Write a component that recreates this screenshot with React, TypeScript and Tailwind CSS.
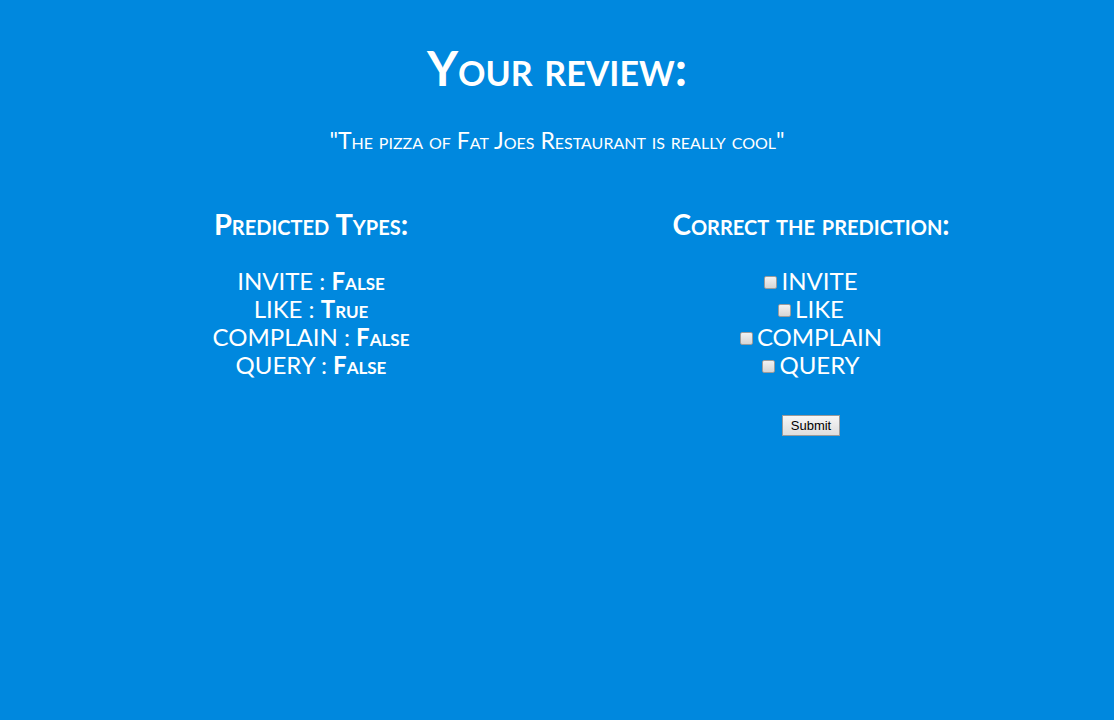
const predicted = [
  { label: "INVITE", value: "False" },
  { label: "LIKE", value: "True" },
  { label: "COMPLAIN", value: "False" },
  { label: "QUERY", value: "False" },
];

export default function App() {
  return (
    <div className="min-h-[720px] bg-[#0088de] text-white font-['Lato',sans-serif] text-center">
      <div className="pt-[39px]">
        <h1 className="text-[48px] leading-[58px] font-bold [font-variant:small-caps]">
          Your review:
        </h1>
        <p className="mt-[29px] text-[23px] leading-[28px] [font-variant:small-caps]">
          "The pizza of Fat Joes Restaurant is really cool"
        </p>
      </div>

      <div className="ml-[61px] mt-[53px] grid w-[1000px] grid-cols-2">
        {/* left */}
        <div>
          <h2 className="text-[29px] leading-[34px] font-bold [font-variant:small-caps]">
            Predicted Types:
          </h2>
          <div className="mt-[26px] text-[24px] leading-[28px]">
            {predicted.map((p) => (
              <div key={p.label}>
                {p.label} : <span className="font-bold [font-variant:small-caps]">{p.value}</span>
              </div>
            ))}
          </div>
        </div>

        {/* right */}
        <div>
          <h2 className="text-[28px] leading-[34px] font-bold [font-variant:small-caps]">
            Correct the prediction:
          </h2>
          <form className="mt-[26px] text-[24px] leading-[28px]">
            {predicted.map((p) => (
              <div key={p.label} className="flex items-center justify-center gap-[4px]">
                <input
                  type="checkbox"
                  className="h-[13px] w-[13px] appearance-none rounded-[2px] border border-[#9c9c9c] bg-gradient-to-b from-[#f2f2f2] to-[#d6d6d6] mt-[2px]"
                />
                <span>{p.label}</span>
              </div>
            ))}
            <button
              type="button"
              className="mt-[36px] border border-[#9a9a9a] bg-gradient-to-b from-[#f6f6f6] to-[#dedede] px-[8px] py-[1px] font-['Liberation_Sans',sans-serif] text-[13px] leading-[17px] text-black"
            >
              Submit
            </button>
          </form>
        </div>
      </div>
    </div>
  );
}
